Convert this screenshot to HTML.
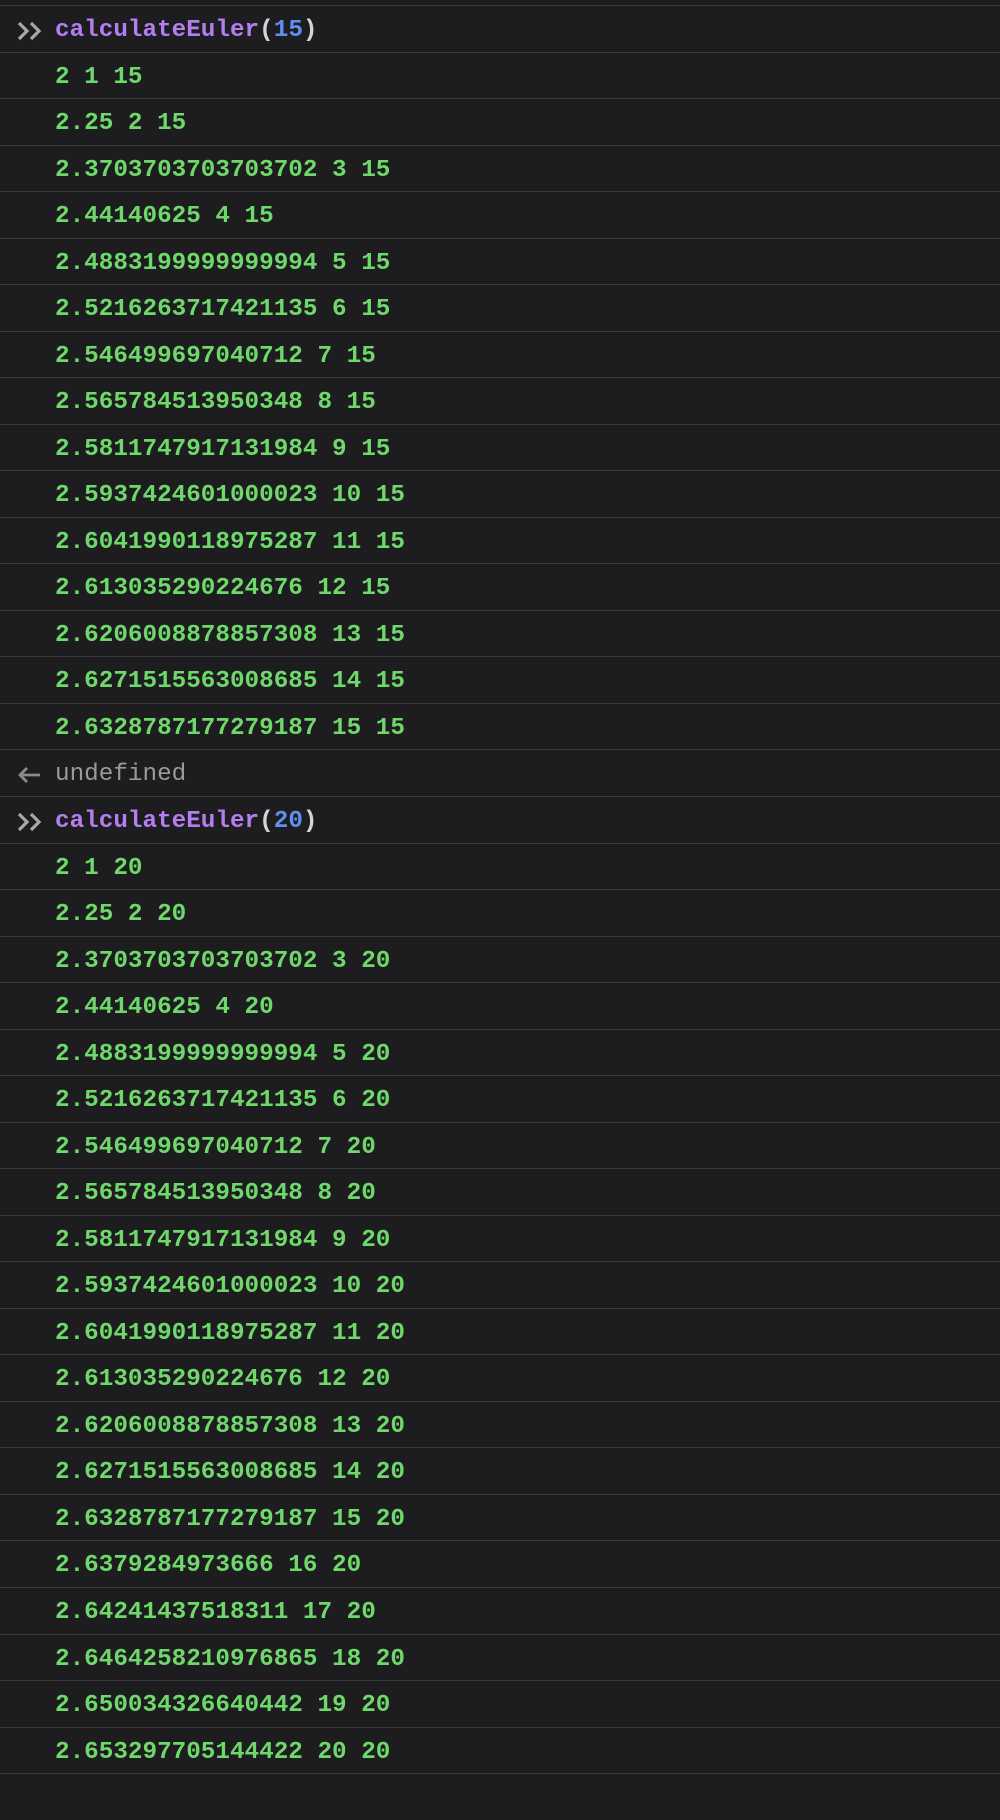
<!DOCTYPE html>
<html><head><meta charset="utf-8"><style>
html,body{margin:0;padding:0;background:#1d1d1f;width:1000px;height:1776px;overflow:hidden}
.r{position:absolute;left:0;width:1000px;height:46.5px;border-top:1.5px solid #38383b;box-sizing:border-box;
font-family:"Liberation Mono",monospace;font-size:24.3px;font-weight:bold;line-height:44px;color:#6fd86b;white-space:pre}
.t{position:absolute;left:55px;top:3px}
.p{color:#b47ef0}.b{color:#5f8ff0}.w{color:#d4d4d4}.g{color:#9a9a9a;font-weight:normal}
svg{position:absolute;left:16px;top:15px}
</style></head><body>
<div id="c"></div>
<script>
const rows=[];
function cmd(n){rows.push(`<svg width="30" height="20" viewBox="0 0 30 20"><path d="M3 2l8 8-8 8M15 2l8 8-8 8" fill="none" stroke="#a8a8aa" stroke-width="3.2"/></svg><span class="t"><span class="p">calculateEuler</span><span class="w">(</span><span class="b">${n}</span><span class="w">)</span></span>`)}
const v=["2","2.25","2.3703703703703702","2.44140625","2.4883199999999994","2.5216263717421135","2.546499697040712","2.565784513950348","2.5811747917131984","2.5937424601000023","2.6041990118975287","2.613035290224676","2.6206008878857308","2.6271515563008685","2.6328787177279187","2.6379284973666","2.64241437518311","2.6464258210976865","2.650034326640442","2.653297705144422"];
cmd(15);for(let i=0;i<15;i++)rows.push(`<span class="t">${v[i]} ${i+1} 15</span>`);
rows.push(`<svg width="30" height="20" viewBox="0 0 30 20"><path d="M4 10h20M11 3l-7 7 7 7" fill="none" stroke="#8a8a8c" stroke-width="2.8"/></svg><span class="t g">undefined</span>`);
cmd(20);for(let i=0;i<20;i++)rows.push(`<span class="t">${v[i]} ${i+1} 20</span>`);
let h='';rows.forEach((r,i)=>{h+=`<div class="r" style="top:${(5+i*46.53).toFixed(2)}px">${r}</div>`});
h+=`<div class="r" style="top:${(5+38*46.53).toFixed(2)}px"></div>`;
document.getElementById('c').innerHTML=h;
</script>
</body></html>
